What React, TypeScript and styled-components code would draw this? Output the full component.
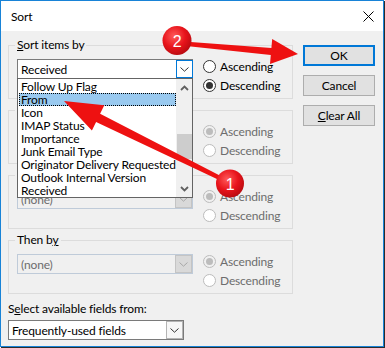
import React from "react";
import styled, { createGlobalStyle } from "styled-components";

const GlobalStyle = createGlobalStyle`
  html, body { margin: 0; padding: 0; background: #ffffff; }
  body { font-family: Lato, "Liberation Sans", sans-serif; font-size: 12px; color: #000; letter-spacing: -0.15px; }
  * { box-sizing: border-box; }
`;

const Page = styled.div`
  position: relative;
  width: 385px;
  height: 348px;
`;

const Window = styled.div`
  width: 384px;
  height: 347px;
  border: 1px solid #1883d7;
  box-shadow: 1px 1px 0 #2b2b2b;
  background: #f0f0f0;
  display: flex;
  flex-direction: column;
`;

const TitleBar = styled.div`
  height: 30px;
  background: #ffffff;
  display: flex;
  align-items: center;
  justify-content: space-between;
  padding: 0 9px 0 10px;
  font-size: 12px;
`;

const Body = styled.div`
  flex: 1;
  padding: 7px 8px 0 7px;
  display: flex;
  gap: 10px;
  align-items: flex-start;
`;

const LeftCol = styled.div`
  width: 285px;
  display: flex;
  flex-direction: column;
  gap: 4px;
`;

const Group = styled.fieldset`
  margin: 0;
  padding: 7px 8px 3px 8px;
  border: 1px solid #dcdcdc;
  min-width: 0;
  display: flex;
  align-items: flex-start;
  gap: 10px;
`;

const Legend = styled.legend<{ $hidden?: boolean }>`
  padding: 0 2px;
  margin-left: -2px;
  line-height: 14px;
  font-size: 12px;
  visibility: ${(p) => (p.$hidden ? "hidden" : "visible")};
`;

const ComboWrap = styled.div`
  position: relative;
  width: 176px;
  flex: none;
`;

const Combo = styled.div<{ $disabled?: boolean }>`
  width: 176px;
  height: 20px;
  border: 1px solid ${(p) => (p.$disabled ? "#bfcbd9" : "#7a7a7a")};
  background: ${(p) => (p.$disabled ? "#f0f0f0" : "#ffffff")};
  color: ${(p) => (p.$disabled ? "#6d6d6d" : "#000")};
  display: flex;
  align-items: stretch;
  font-size: 12px;
`;

const ComboText = styled.div<{ $hidden?: boolean }>`
  flex: 1;
  padding-left: 3px;
  display: flex;
  align-items: center;
  white-space: nowrap;
  visibility: ${(p) => (p.$hidden ? "hidden" : "visible")};
`;

const DropButton = styled.div<{ $variant: "focus" | "plain" | "disabled" }>`
  width: 17px;
  flex: none;
  display: grid;
  place-items: center;
  border: 1px solid
    ${(p) =>
      p.$variant === "focus" ? "#0078d7" : p.$variant === "disabled" ? "#c4c4c4" : "#b4b4b4"};
  background: ${(p) =>
    p.$variant === "focus" ? "#ffffff" : p.$variant === "disabled" ? "#d9d9d9" : "#f7f7f7"};
  margin: ${(p) => (p.$variant === "focus" ? "0 -1px 0 0" : "0")};
  color: ${(p) => (p.$variant === "disabled" ? "#a8a8a8" : "#333")};
`;

const ListBox = styled.div`
  position: absolute;
  left: 0;
  top: 19px;
  width: 176px;
  height: 120px;
  border: 1px solid #646464;
  background: #ffffff;
  z-index: 5;
  display: flex;
`;

const ListItems = styled.div`
  flex: 1;
  padding: 1px 0 0 1px;
`;

const ListItem = styled.div<{ $selected?: boolean }>`
  height: 13px;
  line-height: 13px;
  padding-left: 2px;
  font-size: 12px;
  white-space: nowrap;
  background: ${(p) => (p.$selected ? "#99c9ef" : "transparent")};
  outline: ${(p) => (p.$selected ? "1px dotted #000" : "none")};
  outline-offset: -1px;
`;

const ScrollBar = styled.div`
  width: 16px;
  flex: none;
  background: #f0f0f0;
  display: flex;
  flex-direction: column;
  align-items: stretch;
`;

const ScrollArrow = styled.div`
  height: 17px;
  display: grid;
  place-items: center;
  color: #606060;
`;

const ScrollTrack = styled.div`
  flex: 1;
  display: flex;
  flex-direction: column;
  justify-content: flex-start;
  padding-top: 38px;
`;

const ScrollThumb = styled.div`
  height: 25px;
  margin-left: 1px;
  background: #cdcdcd;
`;

const RadioCol = styled.div`
  display: flex;
  flex-direction: column;
  margin-top: -2px;
`;

const RadioRow = styled.div<{ $disabled?: boolean }>`
  height: 19px;
  display: flex;
  align-items: center;
  gap: 4px;
  color: ${(p) => (p.$disabled ? "#6d6d6d" : "#000")};
  font-size: 12px;
`;

const RadioCircle = styled.span<{ $checked?: boolean; $disabled?: boolean }>`
  width: 13px;
  height: 13px;
  border-radius: 50%;
  border: 1px solid ${(p) => (p.$disabled ? "#bcbcbc" : "#333333")};
  background: ${(p) => (p.$disabled && p.$checked ? "#f0f0f0" : "#ffffff")};
  display: grid;
  place-items: center;
  flex: none;
  &::after {
    content: "";
    width: 7px;
    height: 7px;
    border-radius: 50%;
    background: ${(p) => (p.$disabled ? "#bcbcbc" : "#333333")};
    display: ${(p) => (p.$checked ? "block" : "none")};
  }
`;

const ButtonCol = styled.div`
  width: 72px;
  margin-top: 7px;
  display: flex;
  flex-direction: column;
  gap: 9px;
`;

const Button = styled.div<{ $default?: boolean }>`
  height: 21px;
  background: #e1e1e1;
  border: ${(p) => (p.$default ? "2px solid #0078d7" : "1px solid #adadad")};
  display: grid;
  place-items: center;
  font-size: 12px;
`;

const FieldsLabel = styled.div`
  margin-top: 3px;
  line-height: 15px;
  font-size: 12px;
`;

const Overlay = styled.svg`
  position: absolute;
  left: 0;
  top: 0;
  pointer-events: none;
  z-index: 10;
`;

const Chevron = () => (
  <svg width="9" height="5" viewBox="0 0 9 5">
    <path d="M0.5 0.5 L4.5 4.2 L8.5 0.5" fill="none" stroke="currentColor" strokeWidth="1" />
  </svg>
);

const BoldChevron = ({ up }: { up?: boolean }) => (
  <svg width="9" height="6" viewBox="0 0 9 6">
    <path
      d={up ? "M1 5 L4.5 1.5 L8 5" : "M1 1 L4.5 4.5 L8 1"}
      fill="none"
      stroke="currentColor"
      strokeWidth="1.8"
    />
  </svg>
);

function arrowPoints(
  x1: number,
  y1: number,
  x2: number,
  y2: number,
  headLen: number,
  headHalf: number,
  tailW: number,
  neckW: number
) {
  const dx = x2 - x1;
  const dy = y2 - y1;
  const len = Math.hypot(dx, dy);
  const ux = dx / len;
  const uy = dy / len;
  const nx = -uy;
  const ny = ux;
  const bx = x2 - ux * headLen;
  const by = y2 - uy * headLen;
  const pts = [
    [x1 + (nx * tailW) / 2, y1 + (ny * tailW) / 2],
    [bx + (nx * neckW) / 2, by + (ny * neckW) / 2],
    [bx + nx * headHalf, by + ny * headHalf],
    [x2, y2],
    [bx - nx * headHalf, by - ny * headHalf],
    [bx - (nx * neckW) / 2, by - (ny * neckW) / 2],
    [x1 - (nx * tailW) / 2, y1 - (ny * tailW) / 2],
  ];
  return pts.map((p) => `${p[0].toFixed(1)},${p[1].toFixed(1)}`).join(" ");
}

const items = [
  "Follow Up Flag",
  "From",
  "Icon",
  "IMAP Status",
  "Importance",
  "Junk Email Type",
  "Originator Delivery Requested",
  "Outlook Internal Version",
  "Received",
];

type SortGroupProps = {
  label: React.ReactNode;
  value: string;
  disabled?: boolean;
  ascending?: boolean;
  descending?: boolean;
  focused?: boolean;
  hideLabel?: boolean;
  hideValue?: boolean;
  children?: React.ReactNode;
};

const SortGroup = ({
  label,
  value,
  disabled,
  ascending,
  descending,
  focused,
  hideLabel,
  hideValue,
  children,
}: SortGroupProps) => (
  <Group>
    <Legend $hidden={hideLabel}>{label}</Legend>
    <ComboWrap>
      <Combo $disabled={disabled}>
        <ComboText $hidden={hideValue}>{value}</ComboText>
        <DropButton $variant={disabled ? "disabled" : focused ? "focus" : "plain"}>
          <Chevron />
        </DropButton>
      </Combo>
      {children}
    </ComboWrap>
    <RadioCol>
      <RadioRow $disabled={disabled}>
        <RadioCircle $disabled={disabled} $checked={ascending} />
        Ascending
      </RadioRow>
      <RadioRow $disabled={disabled}>
        <RadioCircle $disabled={disabled} $checked={descending} />
        Descending
      </RadioRow>
    </RadioCol>
  </Group>
);

const thenBy = (
  <>
    Then b<u>y</u>
  </>
);

export default function App() {
  return (
    <Page>
      <GlobalStyle />
      <Window>
        <TitleBar>
          <span>Sort</span>
          <svg width="11" height="11" viewBox="0 0 11 11">
            <path d="M0.5 0.5 L10.5 10.5 M10.5 0.5 L0.5 10.5" stroke="#000" strokeWidth="1" />
          </svg>
        </TitleBar>
        <Body>
          <LeftCol>
            <SortGroup
              label={
                <>
                  <u>S</u>ort items by
                </>
              }
              value="Received"
              descending
              focused
            >
              <ListBox>
                <ListItems>
                  {items.map((it) => (
                    <ListItem key={it} $selected={it === "From"}>
                      {it}
                    </ListItem>
                  ))}
                </ListItems>
                <ScrollBar>
                  <ScrollArrow>
                    <BoldChevron up />
                  </ScrollArrow>
                  <ScrollTrack>
                    <ScrollThumb />
                  </ScrollTrack>
                  <ScrollArrow>
                    <BoldChevron />
                  </ScrollArrow>
                </ScrollBar>
              </ListBox>
            </SortGroup>
            <SortGroup label={thenBy} value="(none)" disabled ascending hideLabel hideValue />
            <SortGroup label={thenBy} value="(none)" disabled ascending hideLabel />
            <SortGroup label={thenBy} value="(none)" disabled ascending />
            <FieldsLabel>
              S<u>e</u>lect available fields from:
            </FieldsLabel>
            <Combo>
              <ComboText>Frequently-used fields</ComboText>
              <DropButton $variant="plain">
                <Chevron />
              </DropButton>
            </Combo>
          </LeftCol>
          <ButtonCol>
            <Button $default>OK</Button>
            <Button>Cancel</Button>
            <Button>
              <span>
                <u>C</u>lear All
              </span>
            </Button>
          </ButtonCol>
        </Body>
      </Window>
      <Overlay width="385" height="348" viewBox="0 0 385 348">
        <defs>
          <radialGradient id="badge" cx="0.4" cy="0.35" r="0.7">
            <stop offset="0" stopColor="#ff5a5a" />
            <stop offset="0.55" stopColor="#e8141b" />
            <stop offset="1" stopColor="#b50a0f" />
          </radialGradient>
        </defs>
        <polygon points={arrowPoints(177, 43, 298, 54, 27, 12.5, 4, 7)} fill="#ee1111" />
        <polygon points={arrowPoints(230, 183, 64, 101, 38, 14, 4, 9)} fill="#ee1111" />
        <circle cx="177" cy="40.5" r="14.5" fill="url(#badge)" />
        <circle cx="230" cy="183.5" r="14" fill="url(#badge)" />
        <text x="177" y="46.5" textAnchor="middle" fill="#fff" fontSize="16" fontFamily="'Liberation Sans', sans-serif">
          2
        </text>
        <text x="230" y="189.5" textAnchor="middle" fill="#fff" fontSize="16" fontFamily="'Liberation Sans', sans-serif">
          1
        </text>
      </Overlay>
    </Page>
  );
}
